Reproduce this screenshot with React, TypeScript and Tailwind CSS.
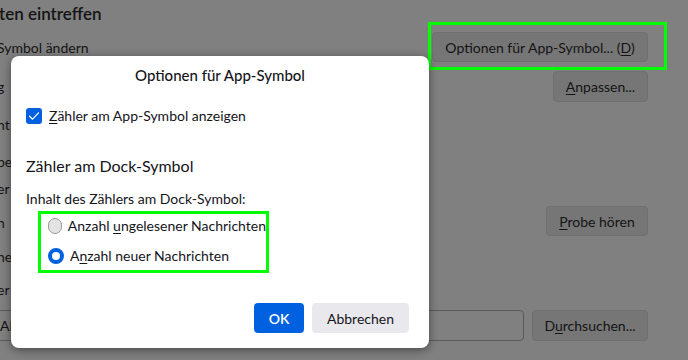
import React from 'react';

const font = 'font-["Lato","Segoe_UI",sans-serif]';

const BgButton: React.FC<{ children: React.ReactNode; className?: string }> = ({ children, className = '' }) => (
  <div className={`h-[30px] flex items-center justify-center rounded-[4px] bg-[#767676] border border-[#707070] text-[14px] text-[#141414] whitespace-nowrap ${className}`}>
    {children}
  </div>
);

const App: React.FC = () => {
  const fragments = [
    { text: 'g', mt: 'mt-[19px]' },
    { text: 'ht', mt: 'mt-[18px]' },
    { text: 'be', mt: 'mt-[17px]' },
    { text: 'er', mt: 'mt-[7px]' },
    { text: 'n', mt: 'mt-[14px]' },
    { text: 'ne', mt: 'mt-[14px]' },
    { text: 'er', mt: 'mt-[13px]' },
  ];

  return (
    <div className={`relative w-[688px] h-[360px] overflow-hidden bg-[#808080] text-[#141414] ${font}`}>
      {/* page behind the dialog */}
      <div className="h-[32px] pt-[3px] text-[17px] font-semibold leading-[22px] -ml-[1px]">ten eintreffen</div>
      <div className="flex">
        <div className="flex-1 flex flex-col text-[14px] leading-[20px] -ml-[3px]">
          <div className="mt-[6px]">Symbol ändern</div>
          {fragments.map((f, i) => (
            <div key={i} className={f.mt}>{f.text}</div>
          ))}
        </div>
        <div className="w-[216px] mr-[40px] flex flex-col items-end">
          <div className="relative">
            <BgButton className="w-[216px]">
              <span>Optionen für App-Symbol... (<u className="underline-offset-2">D</u>)</span>
            </BgButton>
            <div className="absolute -left-[4px] -top-[10px] -right-[19px] -bottom-[8px] border-[3px] border-[#00ff00]"></div>
          </div>
          <BgButton className="w-[95px] mt-[9px] h-[31px]">
            <span><u className="underline-offset-2">A</u>npassen...</span>
          </BgButton>
          <BgButton className="w-[102px] mt-[104px]">
            <span><u className="underline-offset-2">P</u>robe hören</span>
          </BgButton>
        </div>
      </div>
      <div className="mt-[10px] flex items-center">
        <div className="w-[528px] -ml-[4px] h-[31px] border border-[#5a5a5a] rounded-[4px] flex items-center pl-[3px] text-[14px]">Ala</div>
        <BgButton className="ml-[8px] w-[116px] h-[31px]">
          <span>D<u className="underline-offset-2">u</u>rchsuchen...</span>
        </BgButton>
      </div>

      {/* dialog */}
      <div className="absolute left-[11px] top-[56px] w-[418px] h-[292px] bg-white rounded-[8px] shadow-[0_2px_10px_rgba(0,0,0,0.45)] flex flex-col text-[#15141a]">
        <div className="pt-[9px] h-[40px] text-center text-[15px] leading-[20px] font-medium">Optionen für App-Symbol</div>
        <div className="mt-[11px] pl-[15px] flex items-center gap-[7px] text-[14px] leading-[18px]">
          <span className="w-[16px] h-[16px] rounded-[3px] bg-[#0061e0] flex items-center justify-center">
            <svg width="12" height="12" viewBox="0 0 12 12" fill="none">
              <path d="M1.5 6.2 L4.6 9.2 L10.5 2.8" stroke="white" strokeWidth="1.2" strokeLinecap="round" strokeLinejoin="round" />
            </svg>
          </span>
          <span><u className="underline-offset-2">Z</u>ähler am App-Symbol anzeigen</span>
        </div>
        <div className="mt-[30px] pl-[15px] text-[16px] leading-[22px]">Zähler am Dock-Symbol</div>
        <div className="mt-[12px] pl-[15px] text-[14px] leading-[20px]">Inhalt des Zählers am Dock-Symbol:</div>
        <div className="mt-[2px] ml-[27px] w-[231px] h-[62px] border-[3px] border-[#00ff00] flex flex-col pl-[7px] text-[14px] leading-[20px] whitespace-nowrap">
          <div className="flex items-center gap-[6px] h-[24px]">
            <span className="w-[16px] h-[16px] rounded-full bg-[#e3e3e3] border border-[#9a9a9a]"></span>
            <span>Anzahl <u className="underline-offset-2">u</u>ngelesener Nachrichten</span>
          </div>
          <div className="flex items-center gap-[6px] h-[24px] mt-[6px]">
            <span className="w-[16px] h-[16px] rounded-full bg-white border-[4px] border-[#0061e0]"></span>
            <span>A<u className="underline-offset-2">n</u>zahl neuer Nachrichten</span>
          </div>
        </div>
        <div className="mt-auto mb-[15px] mr-[20px] flex justify-end gap-[8px] text-[14px]">
          <div className="w-[50px] h-[30px] rounded-[4px] bg-[#0061e0] text-white font-semibold flex items-center justify-center">OK</div>
          <div className="w-[97px] h-[30px] rounded-[4px] bg-[#e9e9ed] flex items-center justify-center">Abbrechen</div>
        </div>
      </div>
    </div>
  );
};

export default App;
